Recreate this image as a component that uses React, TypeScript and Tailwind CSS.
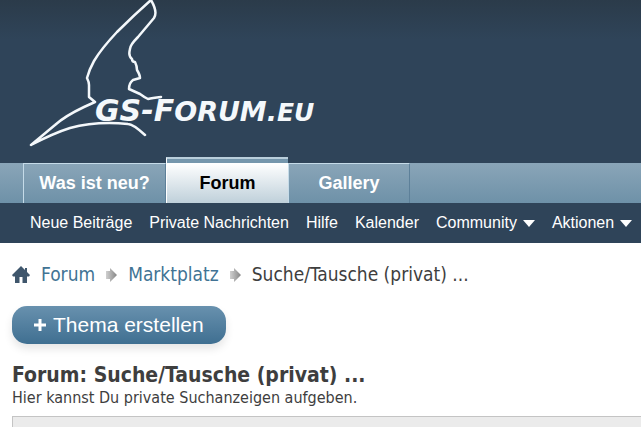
import type { ReactNode } from "react"

interface TabProps {
  text: string
  active?: boolean
}

interface SubItemProps {
  text: string
  menu?: boolean
}

const subItems: SubItemProps[] = [
  { text: "Neue Beiträge" },
  { text: "Private Nachrichten" },
  { text: "Hilfe" },
  { text: "Kalender" },
  { text: "Community", menu: true },
  { text: "Aktionen", menu: true },
]

export default function App() {
  return (
    <div className="min-h-screen overflow-x-hidden bg-white font-['DejaVu_Sans_Condensed','Noto_Sans',sans-serif] text-[#3e3e3e]">
      <header className="bg-[#2f4459] font-['Liberation_Sans',sans-serif]">
        <div className="h-[157px] bg-linear-to-b from-[#2b3b4a] to-[#2f4459] to-25% pl-[28px]">
          <a href="#" aria-label="GS-Forum.eu" className="inline-block">
            <Logo />
          </a>
        </div>

        {/* Tabs */}
        <nav className="flex h-[46px] items-end">
          <div className="flex h-10 w-full items-end bg-linear-to-b from-[#8aa5b8] to-[#6e91a8] pl-[23px]">
            <Tab text="Was ist neu?" />
            <Tab text="Forum" active />
            <Tab text="Gallery" />
          </div>
        </nav>

        {/* Untermenü */}
        <nav className="flex h-10 items-center gap-[17px] pl-[30px] text-[16px] whitespace-nowrap text-white">
          {subItems.map((item) => (
            <SubItem key={item.text} {...item} />
          ))}
        </nav>
      </header>

      <main className="px-3">
        <nav className="flex h-[63px] items-center text-[19px] whitespace-nowrap">
          <a href="#" aria-label="Startseite" className="mr-[11px]">
            <HomeIcon />
          </a>
          <Crumb>Forum</Crumb>
          <Crumb>Marktplatz</Crumb>
          <span>Suche/Tausche (privat) ...</span>
        </nav>

        <button className="flex h-[38px] items-center gap-[7px] rounded-[15px] bg-linear-to-b from-[#6891ae] to-[#3f6f91] px-[22px] font-['Liberation_Sans',sans-serif] text-[21px] text-white shadow-[0_5px_8px_rgba(0,0,0,0.1)]">
          <svg width="12" height="12" viewBox="0 0 12 12" aria-hidden="true">
            <path d="M6 0v12M0 6h12" stroke="#fff" strokeWidth="3" />
          </svg>
          Thema erstellen
        </button>

        <h1 className="mt-[18px] text-[21px] leading-[26px] font-bold">Forum: Suche/Tausche (privat) ...</h1>
        <p className="text-[16px] leading-[20px]">Hier kannst Du private Suchanzeigen aufgeben.</p>
        <div className="-mr-3 mt-2 h-8 border border-r-0 border-[#c4c4c4] bg-[#ebebeb]" />
      </main>
    </div>
  )
}

function Tab({ text, active = false }: TabProps) {
  return (
    <a
      href="#"
      className={
        active
          ? "flex h-[46px] w-[122px] shrink-0 items-center justify-center border-t-2 border-l border-[#b9cedb] border-l-white bg-linear-to-b from-[#7596ac] from-[4px] via-white via-[4px] to-[#bfd0da] pt-1 text-[18px] font-bold text-black"
          : "flex h-10 w-[143px] shrink-0 items-center justify-center border-t border-r border-l border-[#c5dbe8] border-r-[#5d8099] text-[18px] font-bold text-white last:w-[122px]"
      }
    >
      {text}
    </a>
  )
}

function SubItem({ text, menu = false }: SubItemProps) {
  return (
    <a href="#" className="flex shrink-0 items-center gap-[6px]">
      {text}
      {menu && (
        <svg width="12" height="7" viewBox="0 0 12 7" aria-hidden="true">
          <path d="M0 0h12L6 7z" fill="#fff" />
        </svg>
      )}
    </a>
  )
}

function Crumb({ children }: { children: ReactNode }) {
  return (
    <>
      <a href="#" className="text-[#417394]">
        {children}
      </a>
      <svg className="mx-[11px] shrink-0" width="11" height="14" viewBox="0 0 11 14" aria-hidden="true">
        <defs>
          <linearGradient id="arrow" x1="0" x2="1">
            <stop offset="0" stopColor="#d0d0d0" />
            <stop offset="1" stopColor="#858585" />
          </linearGradient>
        </defs>
        <path d="M0 3h4V0l7 7-7 7v-3H0z" fill="url(#arrow)" />
      </svg>
    </>
  )
}

function HomeIcon() {
  return (
    <svg width="18" height="17" viewBox="0 0 18 17" aria-hidden="true">
      <path d="M9 0 0 9l1 1.500h2V17h4.500v-6h3v6H15v-6.500h2L18 9l-3-3V2h-2v2z" fill="#3f566c" />
    </svg>
  )
}

function Logo() {
  return (
    <svg width="310" height="157" viewBox="28 0 310 157">
      <path
        d="M161 97Q152 98 148 99Q144 97 140 94L129 89Q129 83 133 80L140 78Q140 75 137 70Q137 66 135 62Q132 62 132 59Q128 56 130 49Q130 45 138 37L154 18Q158 12 151 0Q134 15 117 32Q101 49 94 61Q89 70 87 78Q89 82 89 85L89 97L95 102L84 107Q65 116 55 125L31 145Q54 133 70 128Q96 121 128 124Q133 124 145 135"
        fill="none"
        stroke="#f4f8fb"
        strokeWidth="2.500"
        strokeLinejoin="round"
        strokeLinecap="round"
      />
      <text
        x="95"
        y="121"
        fill="#f4f8fb"
        fontFamily="DejaVu Sans"
        fontWeight="bold"
        fontStyle="italic"
        fontSize="30"
      >
        GS-F<tspan fontSize="27">ORUM.</tspan>
        <tspan fontSize="25">EU</tspan>
      </text>
    </svg>
  )
}
